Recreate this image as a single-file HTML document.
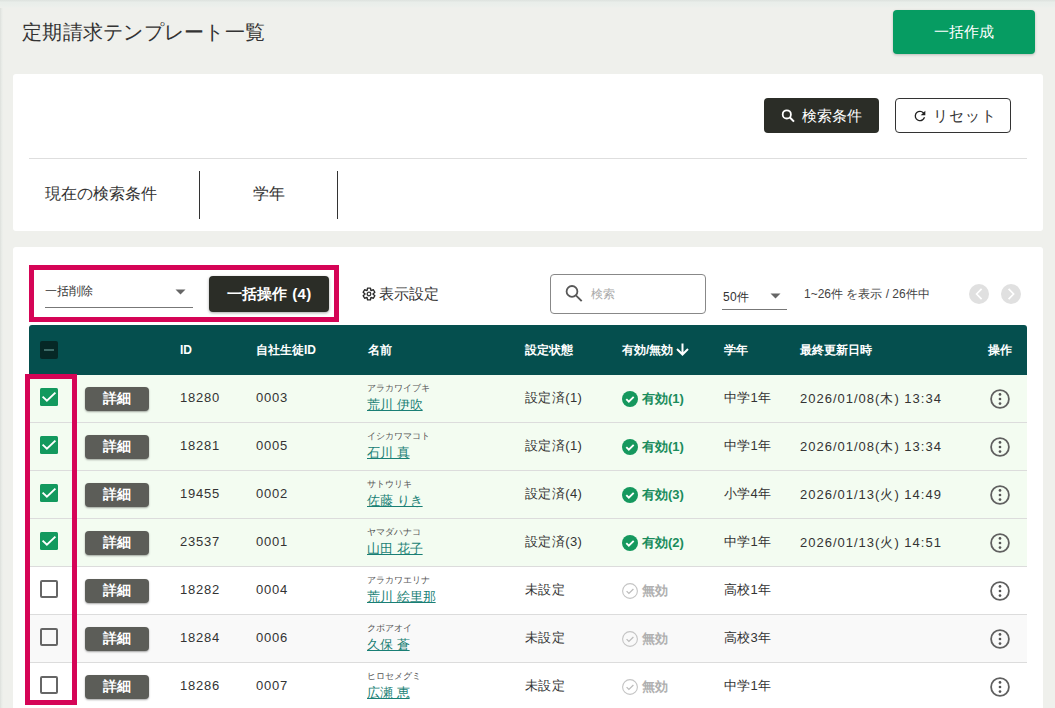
<!DOCTYPE html>
<html lang="ja">
<head>
<meta charset="utf-8">
<style>
*{box-sizing:border-box;margin:0;padding:0}
html,body{width:1055px;height:708px;overflow:hidden}
body{background:#eff0ec;font-family:"Liberation Sans",sans-serif;color:#333;position:relative}
.abs{position:absolute}
.t{position:absolute;white-space:nowrap;line-height:1}
.shL{left:0;top:0;width:3px;height:708px;background:linear-gradient(to right,#dcdfdb,#e6e9e5 40%,#eef0ec)}
.shT{left:0;top:0;width:1055px;height:8px;background:linear-gradient(to bottom,#dde2de,#e9eeea 30%,#ebefeb 75%,#eff0ec)}
.panel{position:absolute;background:#fff;border-radius:3px}
.btn-dark{position:absolute;background:#2b2d27;border-radius:4px;color:#fff}
.row{position:absolute;left:29px;width:998px;height:48px;border-bottom:1px solid #dcdcdc}
.hd{position:absolute;top:0;color:#fff;font-weight:bold;font-size:12px;line-height:1}
.cell{position:absolute;font-size:13px;line-height:1;white-space:nowrap;color:#333}
.num{letter-spacing:.8px}
.cb{position:absolute;left:11px;top:13px;width:18px;height:18px;border-radius:2px}
.cb.on{background:#12995e;border-radius:1.5px}
.cb.off{border:2px solid #666}
.det{position:absolute;left:56px;top:12px;width:64px;height:24px;background:#5c5d58;border-radius:4px;color:#fff;font-weight:bold;font-size:14px;line-height:23px;text-align:center;box-shadow:0 1px 2px rgba(0,0,0,.35)}
.kana{position:absolute;left:338px;top:9px;font-size:9px;line-height:1;color:#555;white-space:nowrap}
.name{position:absolute;left:338px;top:23px;font-size:13px;line-height:1;color:#197f75;text-decoration:underline;white-space:nowrap}
.kebab{position:absolute;left:960.5px;top:14px}
</style>
</head>
<body>
<div class="abs shL"></div>
<div class="abs shT"></div>

<div class="t" style="left:22px;top:22px;font-size:20px;color:#333;letter-spacing:.25px">定期請求テンプレート一覧</div>

<div class="abs" style="left:893px;top:10px;width:142px;height:44px;background:#069c62;border-radius:4px;box-shadow:0 1px 3px rgba(0,0,0,.22);color:#fff;font-size:15px;line-height:44px;text-align:center">一括作成</div>

<!-- panel 1 -->
<div class="panel" style="left:13px;top:74px;width:1030px;height:157px"></div>
<div class="btn-dark" style="left:764px;top:98px;width:115px;height:35px"></div>
<svg class="abs" style="left:780px;top:108px" width="16" height="16" viewBox="0 0 16 16"><circle cx="6.8" cy="6.4" r="4.1" fill="none" stroke="#fff" stroke-width="1.8"/><line x1="9.7" y1="9.3" x2="14" y2="13.6" stroke="#fff" stroke-width="2"/></svg>
<div class="t" style="left:802px;top:108px;font-size:15px;color:#fff">検索条件</div>
<div class="abs" style="left:895px;top:98px;width:116px;height:35px;border:1px solid #333;border-radius:4px;background:#fff"></div>
<svg class="abs" style="left:912px;top:108px" width="16" height="16" viewBox="0 0 24 24"><path d="M17.65 6.35A7.96 7.96 0 0 0 12 4a8 8 0 1 0 7.73 10h-2.08A6 6 0 1 1 12 6c1.66 0 3.14.69 4.22 1.78L13 11h7V4l-2.35 2.35z" fill="#222"/></svg>
<div class="t" style="left:933px;top:108px;font-size:15px;color:#333;letter-spacing:1px">リセット</div>
<div class="abs" style="left:29px;top:158px;width:998px;height:1px;background:#dedede"></div>
<div class="t" style="left:45px;top:186px;font-size:16px;color:#333">現在の検索条件</div>
<div class="abs" style="left:199px;top:171px;width:1px;height:48px;background:#333"></div>
<div class="t" style="left:253px;top:186px;font-size:16px;color:#333">学年</div>
<div class="abs" style="left:337px;top:171px;width:1px;height:48px;background:#333"></div>

<!-- panel 2 -->
<div class="panel" style="left:13px;top:247px;width:1030px;height:480px"></div>
<div class="abs" style="left:29px;top:265px;width:310px;height:57px;border:5px solid #d50456"></div>
<div class="t" style="left:45px;top:285px;font-size:12px;color:#333">一括削除</div>
<div class="abs" style="left:45px;top:307px;width:148px;height:1px;background:#777"></div>
<svg class="abs" style="left:175px;top:289px" width="11" height="6" viewBox="0 0 11 6"><path d="M0.5 0.5h10L5.5 5.5z" fill="#666"/></svg>
<div class="btn-dark" style="left:209px;top:276px;width:120px;height:36px;box-shadow:0 1px 3px rgba(0,0,0,.35);font-size:15px;font-weight:bold;line-height:36px;text-align:center;letter-spacing:.3px">一括操作 (4)</div>

<svg class="abs" style="left:362px;top:287px" width="14" height="14" viewBox="0 0 14 14"><path d="M5.52 1.08 L8.48 1.08 L8.95 3.62 L11.39 2.76 L12.86 5.32 L10.90 7.00 L12.86 8.68 L11.39 11.24 L8.95 10.38 L8.48 12.92 L5.52 12.92 L5.05 10.38 L2.61 11.24 L1.14 8.68 L3.10 7.00 L1.14 5.32 L2.61 2.76 L5.05 3.62Z" fill="none" stroke="#2a2a2a" stroke-width="1.35" stroke-linejoin="round"/><circle cx="7" cy="7" r="1.8" fill="none" stroke="#333" stroke-width="1.3"/></svg>
<div class="t" style="left:379px;top:286px;font-size:15px;color:#333">表示設定</div>

<div class="abs" style="left:550px;top:274px;width:156px;height:40px;border:1px solid #888;border-radius:4px"></div>
<svg class="abs" style="left:563px;top:283px" width="21" height="21" viewBox="0 0 21 21"><circle cx="9" cy="8.4" r="5.4" fill="none" stroke="#585858" stroke-width="1.8"/><line x1="12.9" y1="12.3" x2="18.7" y2="18.1" stroke="#585858" stroke-width="1.9"/></svg>
<div class="t" style="left:591px;top:288px;font-size:12px;color:#aaa">検索</div>

<div class="t" style="left:723px;top:291px;font-size:12px;color:#333;letter-spacing:.3px">50件</div>
<div class="abs" style="left:722px;top:309px;width:65px;height:1px;background:#777"></div>
<svg class="abs" style="left:770px;top:293px" width="11" height="6" viewBox="0 0 11 6"><path d="M0.5 0.5h10L5.5 5.5z" fill="#666"/></svg>
<div class="t" style="left:804px;top:288px;font-size:12px;color:#444">1~26件 を表示 / 26件中</div>
<svg class="abs" style="left:968px;top:284px" width="56" height="20" viewBox="0 0 56 20"><circle cx="11" cy="10" r="10" fill="#e0e0e0"/><path d="M13.6 4.8L8.6 10l5 5.2" fill="none" stroke="#fff" stroke-width="1.7"/><circle cx="43" cy="10" r="10" fill="#e0e0e0"/><path d="M40.6 4.8l5 5.2-5 5.2" fill="none" stroke="#fff" stroke-width="1.7"/></svg>

<!-- table header -->
<div class="abs" style="left:29px;top:325px;width:998px;height:50px;background:#054f4e;border-radius:3px 3px 0 0">
  <div class="abs" style="left:11px;top:16px;width:18px;height:18px;background:#062826;border-radius:2px"><div class="abs" style="left:4px;top:8px;width:10px;height:2px;background:#3d6b67"></div></div>
  <div class="hd" style="left:151px;top:19px">ID</div>
  <div class="hd" style="left:227px;top:19px">自社生徒ID</div>
  <div class="hd" style="left:339px;top:19px">名前</div>
  <div class="hd" style="left:496px;top:19px">設定状態</div>
  <div class="hd" style="left:593px;top:19px">有効/無効</div><svg class="abs" style="left:647px;top:18px" width="13" height="13" viewBox="0 0 13 13"><path d="M6.5 0.5v11M1 6l5.5 5.5L12 6" fill="none" stroke="#fff" stroke-width="2"/></svg>
  <div class="hd" style="left:695px;top:19px">学年</div>
  <div class="hd" style="left:771px;top:19px">最終更新日時</div>
  <div class="hd" style="left:959px;top:19px">操作</div>
</div>

<!-- rows -->
<!--ROWS-->
<div class="row" style="top:375px;background:#f3fcf1"><div class="cb on"><svg class="abs" style="left:0;top:0" width="18" height="18" viewBox="0 0 18 18"><path d="M2.6 8.6l4.3 4.2 8.5-8.2" fill="none" stroke="#fff" stroke-width="1.9"/></svg></div><div class="det">詳細</div><div class="cell num" style="left:151px;top:16px">18280</div><div class="cell num" style="left:227px;top:16px">0003</div><div class="kana">アラカワイブキ</div><div class="name">荒川 伊吹</div><div class="cell" style="left:496px;top:16px;letter-spacing:.4px">設定済(1)</div><svg class="abs" style="left:593px;top:16px" width="16" height="16" viewBox="0 0 16 16"><circle cx="8" cy="8" r="8" fill="#15985e"/><path d="M4.3 8.2l2.5 2.5 4.9-4.9" fill="none" stroke="#fff" stroke-width="1.9"/></svg><div class="cell" style="left:613px;top:17px;font-weight:bold;color:#1a8c5c">有効(1)</div><div class="cell" style="left:695px;top:16px;letter-spacing:.3px">中学1年</div><div class="cell" style="left:771px;top:17px;letter-spacing:1px">2026/01/08(木) 13:34</div><svg class="kebab" width="20" height="20" viewBox="0 0 20 20"><circle cx="10" cy="10" r="8.9" fill="none" stroke="#606060" stroke-width="1.8"/><circle cx="10" cy="5.4" r="1.35" fill="#555"/><circle cx="10" cy="10" r="1.35" fill="#555"/><circle cx="10" cy="14.6" r="1.35" fill="#555"/></svg></div>
<div class="row" style="top:423px;background:#f3fcf1"><div class="cb on"><svg class="abs" style="left:0;top:0" width="18" height="18" viewBox="0 0 18 18"><path d="M2.6 8.6l4.3 4.2 8.5-8.2" fill="none" stroke="#fff" stroke-width="1.9"/></svg></div><div class="det">詳細</div><div class="cell num" style="left:151px;top:16px">18281</div><div class="cell num" style="left:227px;top:16px">0005</div><div class="kana">イシカワマコト</div><div class="name">石川 真</div><div class="cell" style="left:496px;top:16px;letter-spacing:.4px">設定済(1)</div><svg class="abs" style="left:593px;top:16px" width="16" height="16" viewBox="0 0 16 16"><circle cx="8" cy="8" r="8" fill="#15985e"/><path d="M4.3 8.2l2.5 2.5 4.9-4.9" fill="none" stroke="#fff" stroke-width="1.9"/></svg><div class="cell" style="left:613px;top:17px;font-weight:bold;color:#1a8c5c">有効(1)</div><div class="cell" style="left:695px;top:16px;letter-spacing:.3px">中学1年</div><div class="cell" style="left:771px;top:17px;letter-spacing:1px">2026/01/08(木) 13:34</div><svg class="kebab" width="20" height="20" viewBox="0 0 20 20"><circle cx="10" cy="10" r="8.9" fill="none" stroke="#606060" stroke-width="1.8"/><circle cx="10" cy="5.4" r="1.35" fill="#555"/><circle cx="10" cy="10" r="1.35" fill="#555"/><circle cx="10" cy="14.6" r="1.35" fill="#555"/></svg></div>
<div class="row" style="top:471px;background:#f3fcf1"><div class="cb on"><svg class="abs" style="left:0;top:0" width="18" height="18" viewBox="0 0 18 18"><path d="M2.6 8.6l4.3 4.2 8.5-8.2" fill="none" stroke="#fff" stroke-width="1.9"/></svg></div><div class="det">詳細</div><div class="cell num" style="left:151px;top:16px">19455</div><div class="cell num" style="left:227px;top:16px">0002</div><div class="kana">サトウリキ</div><div class="name">佐藤 りき</div><div class="cell" style="left:496px;top:16px;letter-spacing:.4px">設定済(4)</div><svg class="abs" style="left:593px;top:16px" width="16" height="16" viewBox="0 0 16 16"><circle cx="8" cy="8" r="8" fill="#15985e"/><path d="M4.3 8.2l2.5 2.5 4.9-4.9" fill="none" stroke="#fff" stroke-width="1.9"/></svg><div class="cell" style="left:613px;top:17px;font-weight:bold;color:#1a8c5c">有効(3)</div><div class="cell" style="left:695px;top:16px;letter-spacing:.3px">小学4年</div><div class="cell" style="left:771px;top:17px;letter-spacing:1px">2026/01/13(火) 14:49</div><svg class="kebab" width="20" height="20" viewBox="0 0 20 20"><circle cx="10" cy="10" r="8.9" fill="none" stroke="#606060" stroke-width="1.8"/><circle cx="10" cy="5.4" r="1.35" fill="#555"/><circle cx="10" cy="10" r="1.35" fill="#555"/><circle cx="10" cy="14.6" r="1.35" fill="#555"/></svg></div>
<div class="row" style="top:519px;background:#f3fcf1"><div class="cb on"><svg class="abs" style="left:0;top:0" width="18" height="18" viewBox="0 0 18 18"><path d="M2.6 8.6l4.3 4.2 8.5-8.2" fill="none" stroke="#fff" stroke-width="1.9"/></svg></div><div class="det">詳細</div><div class="cell num" style="left:151px;top:16px">23537</div><div class="cell num" style="left:227px;top:16px">0001</div><div class="kana">ヤマダハナコ</div><div class="name">山田 花子</div><div class="cell" style="left:496px;top:16px;letter-spacing:.4px">設定済(3)</div><svg class="abs" style="left:593px;top:16px" width="16" height="16" viewBox="0 0 16 16"><circle cx="8" cy="8" r="8" fill="#15985e"/><path d="M4.3 8.2l2.5 2.5 4.9-4.9" fill="none" stroke="#fff" stroke-width="1.9"/></svg><div class="cell" style="left:613px;top:17px;font-weight:bold;color:#1a8c5c">有効(2)</div><div class="cell" style="left:695px;top:16px;letter-spacing:.3px">中学1年</div><div class="cell" style="left:771px;top:17px;letter-spacing:1px">2026/01/13(火) 14:51</div><svg class="kebab" width="20" height="20" viewBox="0 0 20 20"><circle cx="10" cy="10" r="8.9" fill="none" stroke="#606060" stroke-width="1.8"/><circle cx="10" cy="5.4" r="1.35" fill="#555"/><circle cx="10" cy="10" r="1.35" fill="#555"/><circle cx="10" cy="14.6" r="1.35" fill="#555"/></svg></div>
<div class="row" style="top:567px;background:#ffffff"><div class="cb off"></div><div class="det">詳細</div><div class="cell num" style="left:151px;top:16px">18282</div><div class="cell num" style="left:227px;top:16px">0004</div><div class="kana">アラカワエリナ</div><div class="name">荒川 絵里那</div><div class="cell" style="left:496px;top:16px;letter-spacing:.4px">未設定</div><svg class="abs" style="left:593px;top:16px" width="16" height="16" viewBox="0 0 16 16"><circle cx="8" cy="8" r="7.4" fill="none" stroke="#c4c4c4" stroke-width="1.1"/><path d="M4.6 8.2l2.3 2.3 4.5-4.5" fill="none" stroke="#bbb" stroke-width="1.2"/></svg><div class="cell" style="left:613px;top:17px;font-weight:bold;color:#b0b0b0">無効</div><div class="cell" style="left:695px;top:16px;letter-spacing:.3px">高校1年</div><svg class="kebab" width="20" height="20" viewBox="0 0 20 20"><circle cx="10" cy="10" r="8.9" fill="none" stroke="#606060" stroke-width="1.8"/><circle cx="10" cy="5.4" r="1.35" fill="#555"/><circle cx="10" cy="10" r="1.35" fill="#555"/><circle cx="10" cy="14.6" r="1.35" fill="#555"/></svg></div>
<div class="row" style="top:615px;background:#f9f9f9"><div class="cb off"></div><div class="det">詳細</div><div class="cell num" style="left:151px;top:16px">18284</div><div class="cell num" style="left:227px;top:16px">0006</div><div class="kana">クボアオイ</div><div class="name">久保 蒼</div><div class="cell" style="left:496px;top:16px;letter-spacing:.4px">未設定</div><svg class="abs" style="left:593px;top:16px" width="16" height="16" viewBox="0 0 16 16"><circle cx="8" cy="8" r="7.4" fill="none" stroke="#c4c4c4" stroke-width="1.1"/><path d="M4.6 8.2l2.3 2.3 4.5-4.5" fill="none" stroke="#bbb" stroke-width="1.2"/></svg><div class="cell" style="left:613px;top:17px;font-weight:bold;color:#b0b0b0">無効</div><div class="cell" style="left:695px;top:16px;letter-spacing:.3px">高校3年</div><svg class="kebab" width="20" height="20" viewBox="0 0 20 20"><circle cx="10" cy="10" r="8.9" fill="none" stroke="#606060" stroke-width="1.8"/><circle cx="10" cy="5.4" r="1.35" fill="#555"/><circle cx="10" cy="10" r="1.35" fill="#555"/><circle cx="10" cy="14.6" r="1.35" fill="#555"/></svg></div>
<div class="row" style="top:663px;background:#ffffff"><div class="cb off"></div><div class="det">詳細</div><div class="cell num" style="left:151px;top:16px">18286</div><div class="cell num" style="left:227px;top:16px">0007</div><div class="kana">ヒロセメグミ</div><div class="name">広瀬 恵</div><div class="cell" style="left:496px;top:16px;letter-spacing:.4px">未設定</div><svg class="abs" style="left:593px;top:16px" width="16" height="16" viewBox="0 0 16 16"><circle cx="8" cy="8" r="7.4" fill="none" stroke="#c4c4c4" stroke-width="1.1"/><path d="M4.6 8.2l2.3 2.3 4.5-4.5" fill="none" stroke="#bbb" stroke-width="1.2"/></svg><div class="cell" style="left:613px;top:17px;font-weight:bold;color:#b0b0b0">無効</div><div class="cell" style="left:695px;top:16px;letter-spacing:.3px">中学1年</div><svg class="kebab" width="20" height="20" viewBox="0 0 20 20"><circle cx="10" cy="10" r="8.9" fill="none" stroke="#606060" stroke-width="1.8"/><circle cx="10" cy="5.4" r="1.35" fill="#555"/><circle cx="10" cy="10" r="1.35" fill="#555"/><circle cx="10" cy="14.6" r="1.35" fill="#555"/></svg></div>
<div class="abs" style="left:25px;top:374px;width:52px;height:331px;border:5px solid #d50456"></div>
<!--/ROWS-->
</body>
</html>
